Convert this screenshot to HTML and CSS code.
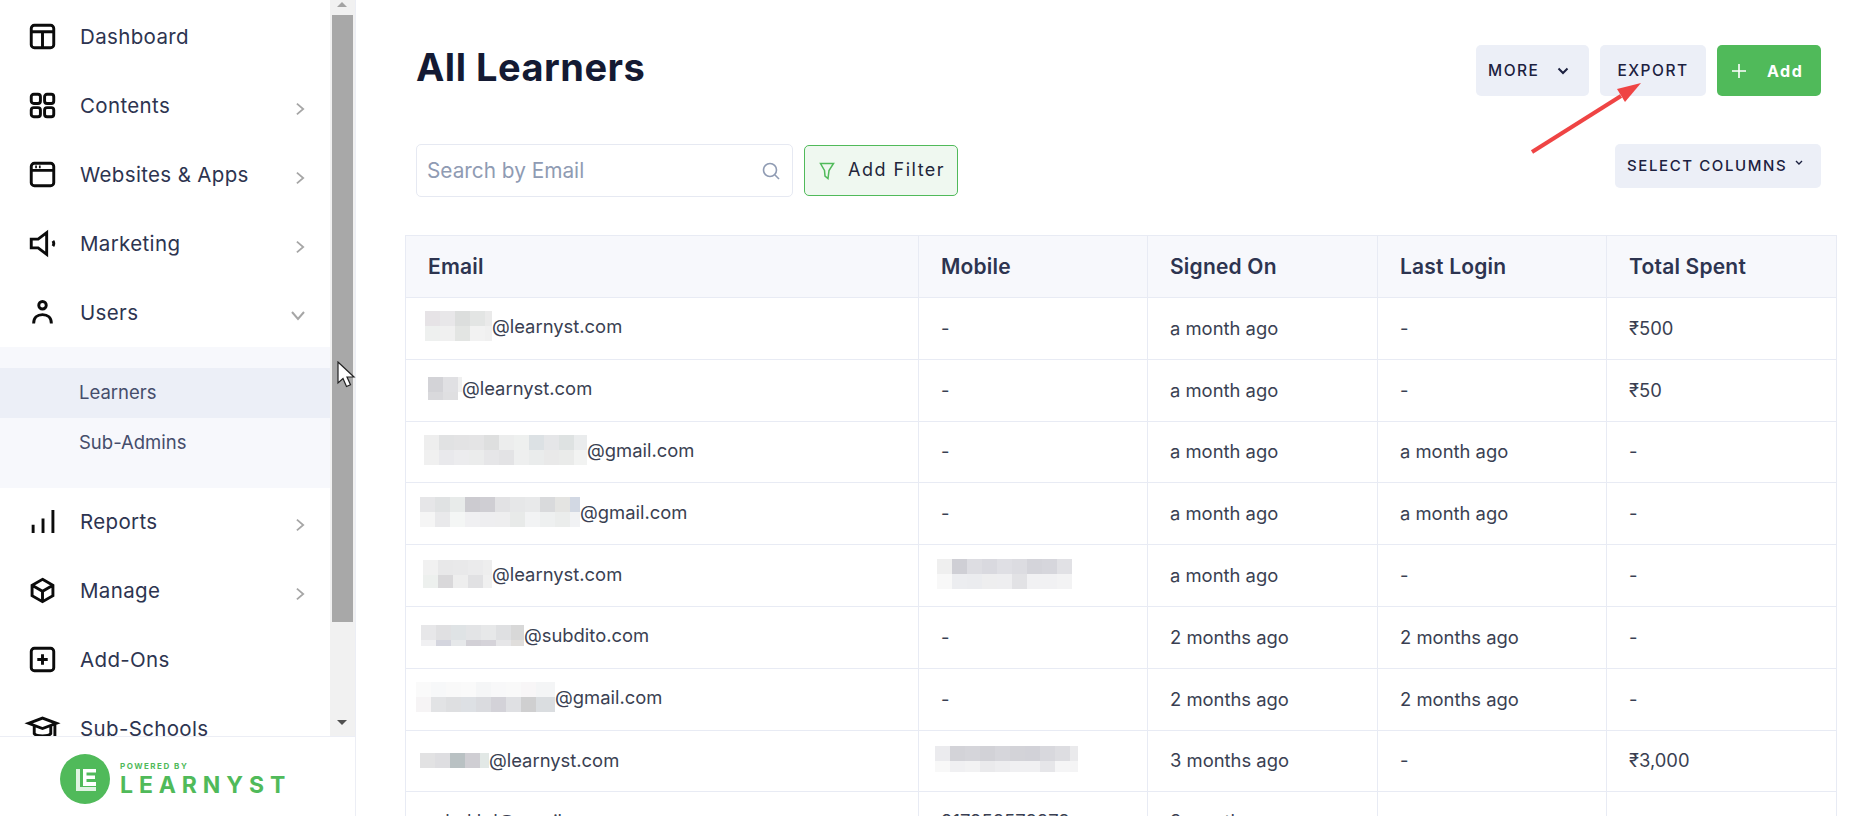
FILE: index.html
```html
<!DOCTYPE html>
<html lang="en">
<head>
  <meta charset="UTF-8">
  <title>All Learners</title>
  <link rel="stylesheet" href="styles.css">
</head>
<body>
  <div class="page">
    <aside class="sidebar">
      <div class="nav-scroll">
        <nav class="nav">
          <a class="nav-item">
            <svg class="nav-icon" viewBox="0 0 24 24"><rect x="1.2" y="1.2" width="21.6" height="21.6" rx="3"/><path d="M1.2 7.5h21.6M12 7.5v15.3"/></svg>
            <span>Dashboard</span>
          </a>
          <a class="nav-item">
            <svg class="nav-icon" viewBox="0 0 24 24"><rect x="1.2" y="1.2" width="8.8" height="8.8" rx="2.4"/><rect x="14" y="1.2" width="8.8" height="8.8" rx="2.4"/><rect x="1.2" y="14" width="8.8" height="8.8" rx="2.4"/><rect x="14" y="14" width="8.8" height="8.8" rx="2.4"/></svg>
            <span>Contents</span>
            <svg class="chevron" viewBox="0 0 10 14"><path d="M1 1l7 6-7 6"/></svg>
          </a>
          <a class="nav-item">
            <svg class="nav-icon" viewBox="0 0 24 24"><rect x="1.2" y="1.2" width="21.6" height="21.6" rx="3"/><path d="M1.2 8h21.6M5 4.7h1.6M8.6 4.7h1.6"/></svg>
            <span>Websites &amp; Apps</span>
            <svg class="chevron" viewBox="0 0 10 14"><path d="M1 1l7 6-7 6"/></svg>
          </a>
          <a class="nav-item">
            <svg class="nav-icon" viewBox="0 0 24 24"><path d="M1.2 7.8h6.6L16 1.6v20.8l-8.2-6.2H1.2zM22 9.5c1 1.5 1 3.5 0 5"/></svg>
            <span>Marketing</span>
            <svg class="chevron" viewBox="0 0 10 14"><path d="M1 1l7 6-7 6"/></svg>
          </a>
          <a class="nav-item">
            <svg class="nav-icon" viewBox="0 0 24 24"><circle cx="12" cy="5" r="3.6"/><path d="M3.5 22.5c0-5.5 3.5-8.5 8.5-8.5s8.500 3 8.500 8.500"/></svg>
            <span>Users</span>
            <svg class="chevron chevron-down" viewBox="0 0 14 10"><path d="M1 1l6 7 6-7"/></svg>
          </a>
          <div class="submenu">
            <a class="sub-item sub-item-active">Learners</a>
            <a class="sub-item">Sub-Admins</a>
          </div>
          <a class="nav-item">
            <svg class="nav-icon" viewBox="0 0 24 24"><path d="M3 23v-8M12.5 23V9M22 23V1"/></svg>
            <span>Reports</span>
            <svg class="chevron" viewBox="0 0 10 14"><path d="M1 1l7 6-7 6"/></svg>
          </a>
          <a class="nav-item">
            <svg class="nav-icon" viewBox="0 0 24 24"><path d="M12 1.3l10 5.7v10l-10 5.7-10-5.7V7zM2 7l10 5.7L22 7M12 12.7v10"/></svg>
            <span>Manage</span>
            <svg class="chevron" viewBox="0 0 10 14"><path d="M1 1l7 6-7 6"/></svg>
          </a>
          <a class="nav-item">
            <svg class="nav-icon" viewBox="0 0 24 24"><rect x="1.2" y="1.2" width="21.6" height="21.6" rx="3"/><path d="M12 7v10M7 12h10"/></svg>
            <span>Add-Ons</span>
          </a>
          <a class="nav-item">
            <svg class="nav-icon nav-icon-cap" viewBox="0 0 30 24"><path d="M1.5 7L15 2l13.5 5L15 12zM7 10v7c2 3 14 3 16 0v-7M27 8v13"/></svg>
            <span>Sub-Schools</span>
          </a>
        </nav>
        <div class="scrollbar">
          <span class="scroll-up"></span>
          <span class="scroll-thumb"></span>
          <span class="scroll-down"></span>
        </div>
      </div>
      <div class="powered">
        <svg class="logo-mark" viewBox="0 0 50 50"><circle cx="25" cy="25" r="25" fill="#50ba5a"/><path d="M16 15h4v18h16v4H16z" fill="#dff3e1"/><path d="M23 15h13v3.5h-9.5v3H35v3.5h-8.5v3H36V32H23z" fill="#fff"/></svg>
        <div class="logo-text">
          <span class="logo-small">POWERED BY</span>
          <span class="logo-name">LEARNYST</span>
        </div>
      </div>
    </aside>

    <main class="main">
      <header class="title-row">
        <h1>All Learners</h1>
        <div class="actions">
          <button class="btn btn-more">MORE
            <svg class="btn-caret" viewBox="0 0 12 8"><path d="M1.5 1.5L6 6l4.5-4.5"/></svg>
          </button>
          <button class="btn btn-export">EXPORT</button>
          <button class="btn btn-add">
            <svg class="btn-plus" viewBox="0 0 14 14"><path d="M7 0v14M0 7h14"/></svg>
            Add
          </button>
        </div>
      </header>

      <div class="filter-row">
        <div class="search">
          <input type="text" placeholder="Search by Email">
          <svg class="search-icon" viewBox="0 0 18 18"><circle cx="8" cy="8" r="6.5"/><path d="M13 13l4 4"/></svg>
        </div>
        <button class="btn-filter">
          <svg class="filter-icon" viewBox="0 0 16 18"><path d="M1.5 1.5h13L10 8.5l-1 8-3-2.5-.5-5.500z"/></svg>
          Add Filter
        </button>
        <button class="btn-columns">SELECT COLUMNS
          <svg class="columns-caret" viewBox="0 0 8 6"><path d="M1 1l3 3 3-3"/></svg>
        </button>
      </div>

      <table class="learners">
        <thead>
          <tr><th>Email</th><th>Mobile</th><th>Signed On</th><th>Last Login</th><th>Total Spent</th></tr>
        </thead>
        <tbody>
          <tr>
            <td class="email"><svg class="mosaic" width="76" height="30"><g shape-rendering="crispEdges"><rect x="9" width="15" height="15" fill="#e6e3e6"/><rect x="24" width="15" height="15" fill="#e8e7e9"/><rect x="39" width="15" height="15" fill="#dcdedd"/><rect x="54" width="15" height="15" fill="#e3e5e4"/><rect x="69" width="7" height="15" fill="#eaeaea"/><rect x="9" y="15" width="15" height="15" fill="#eef0ef"/><rect x="24" y="15" width="15" height="15" fill="#f0f0f0"/><rect x="39" y="15" width="15" height="15" fill="#e3e5e3"/><rect x="54" y="15" width="15" height="15" fill="#f2f2f2"/><rect x="69" y="15" width="7" height="15" fill="#f0f0f0"/></g></svg>@learnyst.com</td>
            <td>-</td><td>a month ago</td><td>-</td><td>₹500</td>
          </tr>
          <tr>
            <td class="email"><svg class="mosaic" width="46" height="23"><g shape-rendering="crispEdges"><rect x="12" width="15" height="15" fill="#d3d3d7"/><rect x="27" width="15" height="15" fill="#e0e0e3"/><rect x="42" width="4" height="15" fill="#f0f0f0"/><rect x="12" y="15" width="15" height="8" fill="#d9d9dc"/><rect x="27" y="15" width="15" height="8" fill="#dfdfe1"/></g></svg>@learnyst.com</td>
            <td>-</td><td>a month ago</td><td>-</td><td>₹50</td>
          </tr>
          <tr>
            <td class="email"><svg class="mosaic" width="171" height="30"><g shape-rendering="crispEdges"><rect x="8" width="15" height="15" fill="#eeeeee"/><rect x="23" width="15" height="15" fill="#e1e2e3"/><rect x="38" width="15" height="15" fill="#e3e3e4"/><rect x="53" width="15" height="15" fill="#e4e4e5"/><rect x="68" width="15" height="15" fill="#dedfdf"/><rect x="83" width="15" height="15" fill="#eceded"/><rect x="98" width="15" height="15" fill="#eef0ef"/><rect x="113" width="15" height="15" fill="#dce1e4"/><rect x="128" width="15" height="15" fill="#e5e6e8"/><rect x="143" width="15" height="15" fill="#dee2e2"/><rect x="158" width="13" height="15" fill="#eaeced"/><rect x="8" y="15" width="15" height="15" fill="#f0f0f0"/><rect x="23" y="15" width="15" height="15" fill="#e9e9ec"/><rect x="38" y="15" width="15" height="15" fill="#ececee"/><rect x="53" y="15" width="15" height="15" fill="#ebecec"/><rect x="68" y="15" width="15" height="15" fill="#e6e6e8"/><rect x="83" y="15" width="15" height="15" fill="#e3e3e5"/><rect x="98" y="15" width="15" height="15" fill="#eeefef"/><rect x="113" y="15" width="15" height="15" fill="#eaecec"/><rect x="128" y="15" width="15" height="15" fill="#e9e9e9"/><rect x="143" y="15" width="15" height="15" fill="#eaebea"/><rect x="158" y="15" width="13" height="15" fill="#f2f3f2"/></g></svg>@gmail.com</td>
            <td>-</td><td>a month ago</td><td>a month ago</td><td>-</td>
          </tr>
          <tr>
            <td class="email"><svg class="mosaic" width="164" height="30"><g shape-rendering="crispEdges"><rect x="4" width="15" height="15" fill="#e6e6e8"/><rect x="19" width="15" height="15" fill="#e0e2e3"/><rect x="34" width="15" height="15" fill="#e8ebea"/><rect x="49" width="15" height="15" fill="#cccbd0"/><rect x="64" width="15" height="15" fill="#cfced3"/><rect x="79" width="15" height="15" fill="#e2e2e4"/><rect x="94" width="15" height="15" fill="#e6e7e8"/><rect x="109" width="15" height="15" fill="#e8e9ea"/><rect x="124" width="15" height="15" fill="#d9dadc"/><rect x="139" width="15" height="15" fill="#e4e4e2"/><rect x="154" width="10" height="15" fill="#d2d8e3"/><rect x="4" y="15" width="15" height="15" fill="#f5f5f5"/><rect x="19" y="15" width="15" height="15" fill="#e9e9eb"/><rect x="34" y="15" width="15" height="15" fill="#f4f6f5"/><rect x="49" y="15" width="15" height="15" fill="#f0f0f2"/><rect x="64" y="15" width="15" height="15" fill="#eeeef0"/><rect x="79" y="15" width="15" height="15" fill="#eeeeef"/><rect x="94" y="15" width="15" height="15" fill="#e8eae9"/><rect x="109" y="15" width="15" height="15" fill="#f2f3f4"/><rect x="124" y="15" width="15" height="15" fill="#eef0f0"/><rect x="139" y="15" width="15" height="15" fill="#ebedec"/><rect x="154" y="15" width="10" height="15" fill="#f1f2f4"/></g></svg>@gmail.com</td>
            <td>-</td><td>a month ago</td><td>a month ago</td><td>-</td>
          </tr>
          <tr>
            <td class="email"><svg class="mosaic" width="76" height="28"><g shape-rendering="crispEdges"><rect x="7" width="15" height="15" fill="#f1f1f1"/><rect x="22" width="15" height="15" fill="#e8e8e9"/><rect x="37" width="15" height="15" fill="#e9e9ea"/><rect x="52" width="15" height="15" fill="#ebebec"/><rect x="67" width="9" height="15" fill="#eeeeee"/><rect x="7" y="15" width="15" height="13" fill="#edf0ee"/><rect x="22" y="15" width="15" height="13" fill="#d9d8da"/><rect x="37" y="15" width="15" height="13" fill="#eeeeee"/><rect x="52" y="15" width="15" height="13" fill="#e1e1e3"/><rect x="67" y="15" width="9" height="13" fill="#f0f0f0"/></g></svg>@learnyst.com</td>
            <td class="masked"><svg class="mosaic" width="135" height="30"><g shape-rendering="crispEdges"><rect width="15" height="15" fill="#efefef"/><rect x="15" width="15" height="15" fill="#cfcfd5"/><rect x="30" width="15" height="15" fill="#dddde2"/><rect x="45" width="15" height="15" fill="#d9d9df"/><rect x="60" width="15" height="15" fill="#dfdfe4"/><rect x="75" width="15" height="15" fill="#dcdce1"/><rect x="90" width="15" height="15" fill="#d4d4da"/><rect x="105" width="15" height="15" fill="#d6d6dc"/><rect x="120" width="15" height="15" fill="#e1e1e5"/><rect y="15" width="15" height="15" fill="#f8f8f8"/><rect x="15" y="15" width="15" height="15" fill="#ecedf0"/><rect x="30" y="15" width="15" height="15" fill="#ebecef"/><rect x="45" y="15" width="15" height="15" fill="#eeeeef"/><rect x="60" y="15" width="15" height="15" fill="#eeeef0"/><rect x="75" y="15" width="15" height="15" fill="#e2e2e5"/><rect x="90" y="15" width="15" height="15" fill="#f1f1f3"/><rect x="105" y="15" width="15" height="15" fill="#f1f1f3"/><rect x="120" y="15" width="15" height="15" fill="#f3f3f4"/></g></svg></td>
            <td>a month ago</td><td>-</td><td>-</td>
          </tr>
          <tr>
            <td class="email"><svg class="mosaic" width="108" height="21"><g shape-rendering="crispEdges"><rect x="5" width="15" height="15" fill="#e7e7e9"/><rect x="20" width="15" height="15" fill="#e0e0e2"/><rect x="35" width="15" height="15" fill="#dfe3e5"/><rect x="50" width="15" height="15" fill="#e3e4e6"/><rect x="65" width="15" height="15" fill="#e7e8e9"/><rect x="80" width="15" height="15" fill="#dfe0e2"/><rect x="95" width="13" height="15" fill="#d8d8d8"/><rect x="5" y="15" width="15" height="6" fill="#f0f0f2"/><rect x="20" y="15" width="15" height="6" fill="#d4d5de"/><rect x="35" y="15" width="15" height="6" fill="#e6e8ea"/><rect x="50" y="15" width="15" height="6" fill="#d2d0d6"/><rect x="65" y="15" width="15" height="6" fill="#d5d3d9"/><rect x="80" y="15" width="15" height="6" fill="#e6e6e8"/><rect x="95" y="15" width="13" height="6" fill="#e0dedc"/></g></svg>@subdito.com</td>
            <td>-</td><td>2 months ago</td><td>2 months ago</td><td>-</td>
          </tr>
          <tr>
            <td class="email"><svg class="mosaic" width="139" height="30"><g shape-rendering="crispEdges"><rect width="15" height="15" fill="#fafafa"/><rect x="15" width="15" height="15" fill="#f7f8f9"/><rect x="30" width="15" height="15" fill="#f9f9f9"/><rect x="45" width="15" height="15" fill="#fafafa"/><rect x="60" width="15" height="15" fill="#f5f6f7"/><rect x="75" width="15" height="15" fill="#f8f8f9"/><rect x="90" width="15" height="15" fill="#f9f9f9"/><rect x="105" width="15" height="15" fill="#f8f6f7"/><rect x="120" width="19" height="15" fill="#f4f5f6"/><rect y="15" width="15" height="15" fill="#f6f4f5"/><rect x="15" y="15" width="15" height="15" fill="#e2e3e5"/><rect x="30" y="15" width="15" height="15" fill="#dedfe1"/><rect x="45" y="15" width="15" height="15" fill="#dde0e4"/><rect x="60" y="15" width="15" height="15" fill="#dadbdf"/><rect x="75" y="15" width="15" height="15" fill="#d3d2d8"/><rect x="90" y="15" width="15" height="15" fill="#dfe0e3"/><rect x="105" y="15" width="15" height="15" fill="#cfcfd0"/><rect x="120" y="15" width="19" height="15" fill="#dadde0"/></g></svg>@gmail.com</td>
            <td>-</td><td>2 months ago</td><td>2 months ago</td><td>-</td>
          </tr>
          <tr>
            <td class="email"><svg class="mosaic" width="73" height="15"><g shape-rendering="crispEdges"><rect x="4" width="15" height="15" fill="#e2e2e3"/><rect x="19" width="15" height="15" fill="#dedee1"/><rect x="34" width="15" height="15" fill="#b9c1c3"/><rect x="49" width="15" height="15" fill="#cfced3"/><rect x="64" width="9" height="15" fill="#e2e8e6"/></g></svg>@learnyst.com</td>
            <td class="masked"><svg class="mosaic mosaic-wide" width="143" height="26"><g shape-rendering="crispEdges"><rect width="15" height="15" fill="#ebebee"/><rect x="15" width="15" height="15" fill="#d3d3d8"/><rect x="30" width="15" height="15" fill="#d5d5da"/><rect x="45" width="15" height="15" fill="#d2d2d7"/><rect x="60" width="15" height="15" fill="#d6d6db"/><rect x="75" width="15" height="15" fill="#d3d3d8"/><rect x="90" width="15" height="15" fill="#d2d2d8"/><rect x="105" width="15" height="15" fill="#d8d8dd"/><rect x="120" width="15" height="15" fill="#dddde1"/><rect x="135" width="8" height="15" fill="#eaeaec"/><rect y="15" width="15" height="11" fill="#f8f8f8"/><rect x="15" y="15" width="15" height="11" fill="#f0f0f2"/><rect x="30" y="15" width="15" height="11" fill="#f2f2f3"/><rect x="45" y="15" width="15" height="11" fill="#eaeaec"/><rect x="60" y="15" width="15" height="11" fill="#ededef"/><rect x="75" y="15" width="15" height="11" fill="#f0f0f2"/><rect x="90" y="15" width="15" height="11" fill="#f0f0f2"/><rect x="105" y="15" width="15" height="11" fill="#e6e6e9"/><rect x="120" y="15" width="15" height="11" fill="#f5f5f6"/><rect x="135" y="15" width="8" height="11" fill="#f4f4f5"/></g></svg></td>
            <td>3 months ago</td><td>-</td><td>₹3,000</td>
          </tr>
          <tr>
            <td class="email email-plain">rahul.kd@gmail.com</td>
            <td>917958578878</td><td>3 months ago</td><td>-</td><td>-</td>
          </tr>
        </tbody>
      </table>

      <svg class="arrow" width="116" height="76" viewBox="0 0 116 76"><path d="M3 73L92 17" stroke="#ef4444" stroke-width="4"/><path d="M112 4L88 10l8 13z" fill="#ef4444"/></svg>
    </main>

    <svg class="cursor" width="20" height="28" viewBox="0 0 20 28"><path d="M1 1v21l5-4.500 3.500 8 4-1.800-3.500-7.700h7z" fill="#fff" stroke="#222" stroke-width="1.200"/></svg>
  </div>
</body>
</html>
```

FILE: styles.css
```css
* {
  box-sizing: border-box;
}

html,
body {
  margin: 0;
  height: 816px;
  overflow: hidden;
}

body {
  font-family: Inter, "Noto Sans", sans-serif;
  color: #2d3450;
  background: #fff;
}

.page {
  position: relative;
  display: flex;
  height: 816px;
}

/* sidebar */
.sidebar {
  flex: 0 0 356px;
  display: flex;
  flex-direction: column;
  border-right: 1px solid #eceef5;
}

.nav-scroll {
  flex: 0 0 736px;
  display: flex;
  overflow: hidden;
}

.nav {
  flex: 0 0 330px;
  padding-top: 2px;
}

.nav-item {
  display: flex;
  align-items: center;
  height: 69px;
  padding: 0 25px 0 30px;
  font-size: 20.5px;
  letter-spacing: 0.35px;
  color: #2d3450;
}

.nav-icon {
  flex: 0 0 25px;
  width: 25px;
  height: 25px;
  margin-right: 25px;
  fill: none;
  stroke: #0b0b0b;
  stroke-width: 2.8;
  overflow: visible;
}

.nav-icon-cap {
  flex: 0 0 31px;
  width: 31px;
  margin-left: -3px;
  margin-right: 22px;
}

.chevron {
  width: 9px;
  height: 14px;
  margin-left: auto;
  margin-top: 6px;
  fill: none;
  stroke: #a6a6a6;
  stroke-width: 2;
}

.chevron-down {
  width: 14px;
  height: 10px;
  margin-right: 0;
}

.submenu {
  height: 141px;
  margin-bottom: -1px;
  padding-top: 21px;
  background: #f7f8fc;
}

.sub-item {
  display: flex;
  align-items: center;
  height: 50px;
  padding: 0 0 2px 79px;
  font-size: 18.5px;
  color: #454d6b;
}

.sub-item-active {
  background: #eceff7;
}

.scrollbar {
  position: relative;
  flex: 0 0 25px;
  background: #f1f1f1;
}

.scroll-thumb {
  position: absolute;
  top: 15px;
  left: 2px;
  width: 21px;
  height: 607px;
  background: #a8a8a8;
}

.scroll-up,
.scroll-down {
  position: absolute;
  left: 7px;
  width: 0;
  height: 0;
  border-left: 5.5px solid transparent;
  border-right: 5.5px solid transparent;
}

.scroll-up {
  top: 2px;
  border-bottom: 5px solid #a3a3a3;
}

.scroll-down {
  top: 720px;
  border-top: 5px solid #505050;
}

.powered {
  flex: 1;
  display: flex;
  align-items: center;
  padding: 4px 0 0 60px;
  border-top: 1px solid #eceef5;
}

.logo-mark {
  width: 50px;
  height: 50px;
  margin-right: 10px;
}

.logo-text {
  display: flex;
  flex-direction: column;
  margin-top: 3px;
  color: #50ba5a;
  font-weight: 700;
}

.logo-small {
  font-size: 8px;
  line-height: 11px;
  letter-spacing: 1.5px;
}

.logo-name {
  font-size: 23px;
  line-height: 27px;
  letter-spacing: 5.9px;
}

/* main */
.main {
  position: relative;
  flex: 1;
  min-width: 0;
  padding: 45px 39px 0 48px;
}

.title-row {
  display: flex;
  justify-content: space-between;
  align-items: flex-start;
  padding: 0 16px 0 12px;
}

h1 {
  margin: 0;
  font-size: 38px;
  line-height: 45px;
  font-weight: 700;
  letter-spacing: 0.5px;
  color: #141a33;
}

.actions {
  display: flex;
  gap: 11px;
}

.btn {
  display: flex;
  align-items: center;
  height: 51px;
  border: 0;
  border-radius: 5px;
  background: #eceff7;
  font-family: inherit;
  font-size: 15.5px;
  font-weight: 500;
  letter-spacing: 1.5px;
  color: #1c2140;
}

.btn-more {
  width: 113px;
  padding: 0 0 0 12px;
}

.btn-caret {
  width: 12px;
  height: 8px;
  margin-left: 18px;
  fill: none;
  stroke: #1c2140;
  stroke-width: 2;
}

.btn-export {
  width: 106px;
  justify-content: center;
}

.btn-add {
  width: 104px;
  padding: 0 0 0 15px;
  background: #50ba5a;
  color: #fff;
  font-size: 16px;
  font-weight: 700;
}

.btn-plus {
  width: 14px;
  height: 14px;
  margin-right: 21px;
  stroke: #fff;
  stroke-width: 1.6;
}

.filter-row {
  display: flex;
  align-items: flex-start;
  margin-top: 48px;
  padding: 0 16px 0 12px;
}

.search {
  position: relative;
  width: 377px;
  height: 53px;
  border: 1px solid #e6e9f2;
  border-radius: 5px;
}

.search input {
  width: 100%;
  height: 100%;
  padding: 0 40px 1px 10px;
  border: 0;
  background: transparent;
  font-family: inherit;
  font-size: 20.8px;
  outline: none;
}

.search input::placeholder {
  color: #8f9bb3;
  opacity: 1;
}

.search-icon {
  position: absolute;
  top: 17px;
  right: 12px;
  width: 18px;
  height: 18px;
  fill: none;
  stroke: #8f9bb3;
  stroke-width: 1.6;
}

.btn-filter {
  display: flex;
  align-items: center;
  height: 51px;
  width: 154px;
  margin: 1px 0 0 11px;
  padding: 0 0 2px 14px;
  border: 1px solid #50ba5a;
  border-radius: 5px;
  background: #eff8f0;
  font-family: inherit;
  font-size: 18px;
  letter-spacing: 1.5px;
  color: #22263a;
}

.filter-icon {
  width: 16px;
  height: 18px;
  margin: 3px 13px 0 0;
  fill: none;
  stroke: #50ba5a;
  stroke-width: 1.5;
}

.btn-columns {
  display: flex;
  align-items: center;
  height: 44px;
  width: 206px;
  margin-left: auto;
  padding: 0 0 2px 12px;
  border: 0;
  border-radius: 5px;
  background: #eceff7;
  font-family: inherit;
  font-size: 15px;
  font-weight: 500;
  letter-spacing: 1.6px;
  color: #1c2140;
}

.columns-caret {
  width: 8px;
  height: 6px;
  margin: -4px 0 0 8px;
  fill: none;
  stroke: #1c2140;
  stroke-width: 1.4;
}

.learners {
  width: 1432px;
  margin: 38px 0 0 1px;
  border-collapse: collapse;
  table-layout: fixed;
}

.learners th,
.learners td {
  border: 1px solid #e8ebf4;
  padding: 0 22px;
  text-align: left;
}

.learners th {
  height: 62px;
  background: #f7f8fc;
  font-size: 21px;
  font-weight: 600;
  letter-spacing: 0.2px;
  color: #2d3450;
}

.learners td {
  height: 61.8px;
  padding-bottom: 1px;
  font-size: 18.4px;
  color: #3a3f52;
}

.learners th:nth-child(1) {
  width: 513px;
}

.learners th:nth-child(2),
.learners th:nth-child(4) {
  width: 229px;
}

.learners th:nth-child(3) {
  width: 230px;
}

.learners td.email {
  padding-left: 10px;
}

.learners td.email-plain {
  padding-left: 22px;
}

.learners td.masked {
  padding-left: 18px;
}

.learners tbody tr:last-child td {
  padding-bottom: 3px;
}

.mosaic {
  display: inline-block;
  vertical-align: middle;
  margin-bottom: 3px;
}

.mosaic-wide {
  margin-left: -2px;
}

.arrow {
  position: absolute;
  top: 79px;
  left: 1173px;
}

.cursor {
  position: absolute;
  top: 361px;
  left: 337px;
}
```
